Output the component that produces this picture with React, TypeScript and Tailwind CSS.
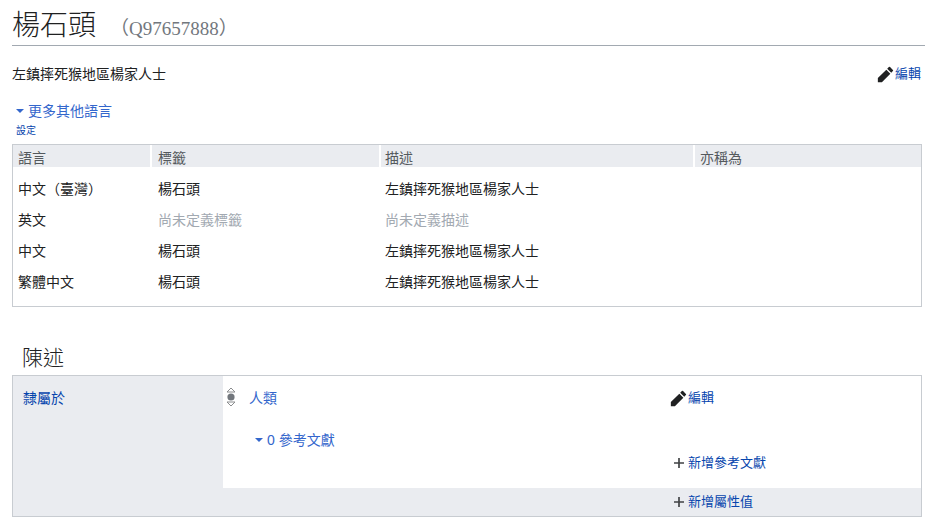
const sans = "font-['Liberation_Sans','Noto_Sans_CJK_TC',sans-serif]";

function Pencil() {
  return (
    <svg width="17" height="17" viewBox="0 0 20 20" className="shrink-0 fill-[#202122]">
      <path d="m16.77 8 1.94-2a1 1 0 0 0 0-1.41l-3.34-3.3a1 1 0 0 0-1.41 0L12 3.23zM1 14.25V19h4.75l9.96-9.96-4.75-4.75z" />
    </svg>
  );
}

function Plus() {
  return (
    <svg width="10" height="10" viewBox="4 4 12 12" className="shrink-0 fill-[#404244]">
      <path d="M11 9V4H9v5H4v2h5v5h2v-5h5V9z" />
    </svg>
  );
}

function Caret() {
  return <span className="h-0 w-0 border-x-[4px] border-t-[4px] border-x-transparent border-t-[#36c]" />;
}

const rows = [
  ["中文（臺灣）", "楊石頭", "左鎮摔死猴地區楊家人士", false],
  ["英文", "尚未定義標籤", "尚未定義描述", true],
  ["中文", "楊石頭", "左鎮摔死猴地區楊家人士", false],
  ["繁體中文", "楊石頭", "左鎮摔死猴地區楊家人士", false],
] as const;

function Ranker() {
  return (
    <svg width="10" height="20" viewBox="0 0 10 20" className="shrink-0">
      <path d="M1 5 L5 1 L9 5 Z" fill="none" stroke="#8a8c8e" strokeWidth="1" />
      <circle cx="5" cy="10" r="3.6" fill="#72777d" />
      <path d="M1 15 L5 19 L9 15 Z" fill="none" stroke="#8a8c8e" strokeWidth="1" />
    </svg>
  );
}

export default function App() {
  return (
    <div className={`${sans} h-[521px] w-[925px] overflow-hidden bg-white pl-3 text-sm leading-5 text-[#202122]`}>
      <h1 className="flex h-[46px] items-end border-b border-[#a2a9b1] font-['Liberation_Serif','Noto_Sans_CJK_TC',serif] text-[28px] leading-[38px] font-light text-[#202122]">
        <span>楊石頭</span>
        <span className="ml-[14px] text-[19px] leading-[32px] font-normal text-[#72777d]">（Q97657888）</span>
      </h1>

      <div className="mt-[18px] flex h-5 items-center justify-between pr-1">
        <span>左鎮摔死猴地區楊家人士</span>
        <span className="flex items-center gap-[1px] text-[13px] text-[#0645ad]">
          <Pencil />
          編輯
        </span>
      </div>

      <div className="mt-[17px] flex h-5 items-center gap-[4px] pl-1 text-[#36c]">
        <Caret />
        更多其他語言
      </div>
      <div className="h-[15px] pl-1 pt-[3px] text-[10px] leading-[13px] text-[#0645ad]">設定</div>

      <div className="mt-[8px] h-[163px] w-[910px] border border-[#c8ccd1]">
        <div className="grid h-[22px] grid-cols-[139px_229px_314px_1fr] bg-[#eaecf0] leading-[26px] text-[#54595d]">
          <div className="border-r-2 border-white pl-[5px]">語言</div>
          <div className="border-r-2 border-white pl-[6px]">標籤</div>
          <div className="border-r-2 border-white pl-[4px]">描述</div>
          <div className="pl-[5px]">亦稱為</div>
        </div>
        <div className="pt-[6px]">
          {rows.map(([lang, label, desc, missing], i) => (
            <div key={i} className="grid h-[31px] grid-cols-[139px_229px_1fr] items-center">
              <div className="pl-[5px]">{lang}</div>
              <div className={`pl-[6px] ${missing ? "text-[#a2a9b1]" : ""}`}>{label}</div>
              <div className={`pl-[4px] ${missing ? "text-[#a2a9b1]" : ""}`}>{desc}</div>
            </div>
          ))}
        </div>
      </div>

      <h2 className="mt-[35px] h-[32px] pl-[10px] text-[21px] leading-[32px] font-light text-[#202122]">陳述</h2>

      <div className="mt-[1px] h-[142px] w-[910px] border border-[#c8ccd1] bg-[#eaecf0]">
        <div className="flex h-[112px]">
          <div className="w-[210px] pl-[10px] pt-[12px] text-[#0645ad]">隸屬於</div>
          <div className="relative flex-1 bg-white">
            <div className="flex h-[44px] pt-[12px]">
              <div className="ml-[3px] mr-[13px] mt-[-1px]"><Ranker /></div>
              <div className="w-[421px] text-[#36c]">人類</div>
              <span className="flex h-5 items-center gap-[1px] text-[13px] text-[#0645ad]">
                <Pencil />
                編輯
              </span>
            </div>
            <div className="box-content flex h-5 items-center gap-[4px] pl-[32px] pt-[10px] text-[#36c]">
              <Caret />
              0 參考文獻
            </div>
            <div className="mt-[3px] flex h-5 items-center gap-[4px] pl-[451px] text-[13px] text-[#0645ad]">
              <Plus />
              新增參考文獻
            </div>
          </div>
        </div>
        <div className="flex h-[27px] items-center gap-[4px] pl-[661px] text-[13px] text-[#0645ad]">
          <Plus />
          新增屬性值
        </div>
      </div>
    </div>
  );
}
